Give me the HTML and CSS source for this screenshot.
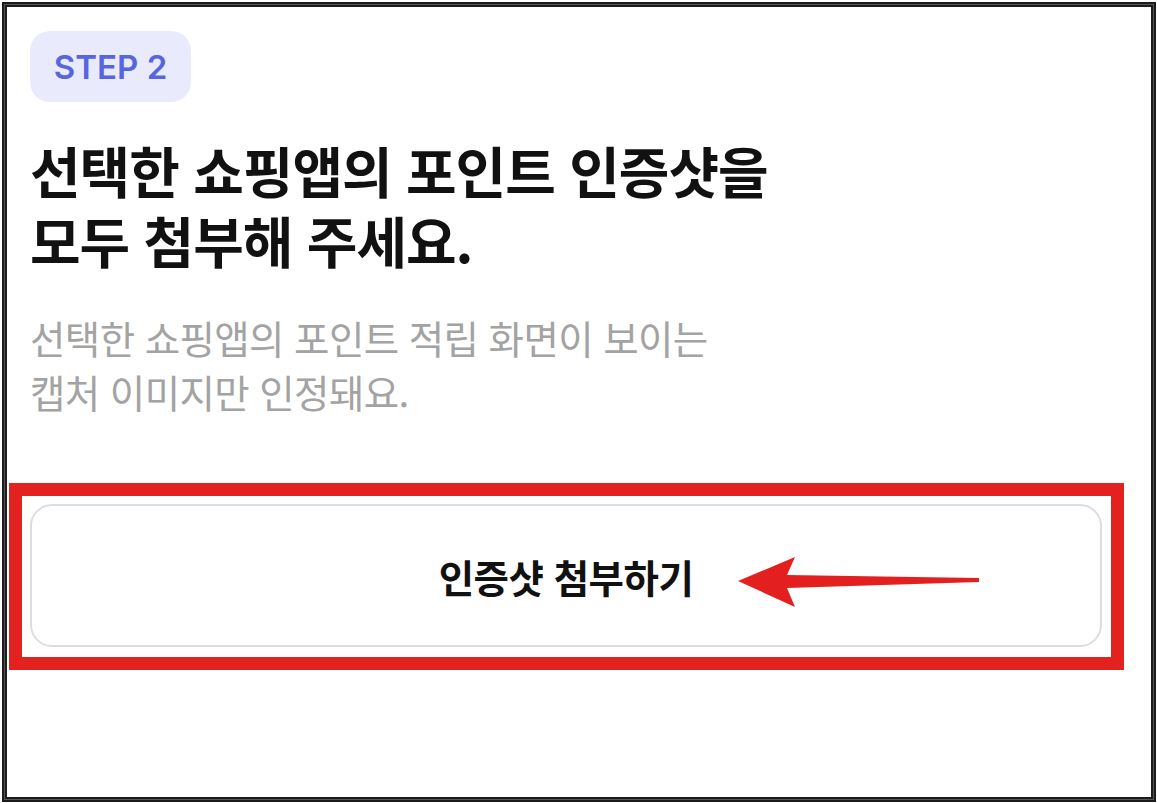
FILE: index.html
```html
<!DOCTYPE html>
<html lang="ko">
<head>
<meta charset="utf-8">
<link rel="stylesheet" href="styles.css">
</head>
<body>
<div class="frame">
  <div class="content">
    <span class="step">STEP 2</span>
    <h1 class="title">선택한 쇼핑앱의 포인트 인증샷을<br>모두 첨부해 주세요.</h1>
    <p class="desc">선택한 쇼핑앱의 포인트 적립 화면이 보이는<br>캡처 이미지만 인정돼요.</p>
    <div class="button-wrap">
      <button class="attach">인증샷 첨부하기</button>
      <div class="highlight"></div>
      <svg class="arrow" width="250" height="60" viewBox="0 0 250 60">
        <polygon points="0,27 57,3 49,21 241,24 241,28 49,34 57,53" fill="#e3201f"/>
      </svg>
    </div>
  </div>
</div>
</body>
</html>
```
FILE: styles.css
```css
html, body {
  margin: 0;
  padding: 0;
  background: #ffffff;
}
body {
  width: 1157px;
  height: 803px;
  overflow: hidden;
  font-family: "Noto Sans CJK KR", "Noto Sans", sans-serif;
}
.frame {
  position: relative;
  margin: 2px 0 0 2px;
  width: 1144px;
  height: 790px;
  border: 5px solid #1c1c1c;
  outline: 1px solid #555;
  outline-offset: -3px;
  box-sizing: content-box;
  background: #fff;
}
.content {
  padding: 24px 0 0 23px;
}
.step {
  display: inline-flex;
  align-items: center;
  justify-content: center;
  width: 161px;
  height: 71px;
  border-radius: 20px;
  background: #e9ebfc;
  color: #5766df;
  font-family: Inter, "Noto Sans", sans-serif;
  font-weight: 600;
  font-size: 33px;
}
.title {
  margin: 32px 0 0 0;
  font-size: 55px;
  line-height: 70px;
  font-weight: 700;
  color: #111111;
  letter-spacing: -1px;
}
.desc {
  margin: 36px 0 0 0;
  font-size: 38.5px;
  line-height: 54px;
  font-weight: 400;
  color: #a3a3a3;
  letter-spacing: -0.6px;
}
.button-wrap {
  position: relative;
  margin-top: 86px;
  width: 1072px;
}
.attach {
  display: flex;
  align-items: center;
  justify-content: center;
  width: 1072px;
  height: 143px;
  border: 2px solid #dddddd;
  border-radius: 22px;
  background: #ffffff;
  font-family: "Noto Sans CJK KR", sans-serif;
  font-size: 38.5px;
  font-weight: 700;
  color: #111111;
  letter-spacing: -0.5px;
  padding: 0;
}
.highlight {
  position: absolute;
  left: -21px;
  top: -21px;
  width: 1115px;
  height: 187px;
  box-sizing: border-box;
  border: 13px solid #e3211f;
}
.arrow {
  position: absolute;
  left: 708px;
  top: 50px;
}
```
